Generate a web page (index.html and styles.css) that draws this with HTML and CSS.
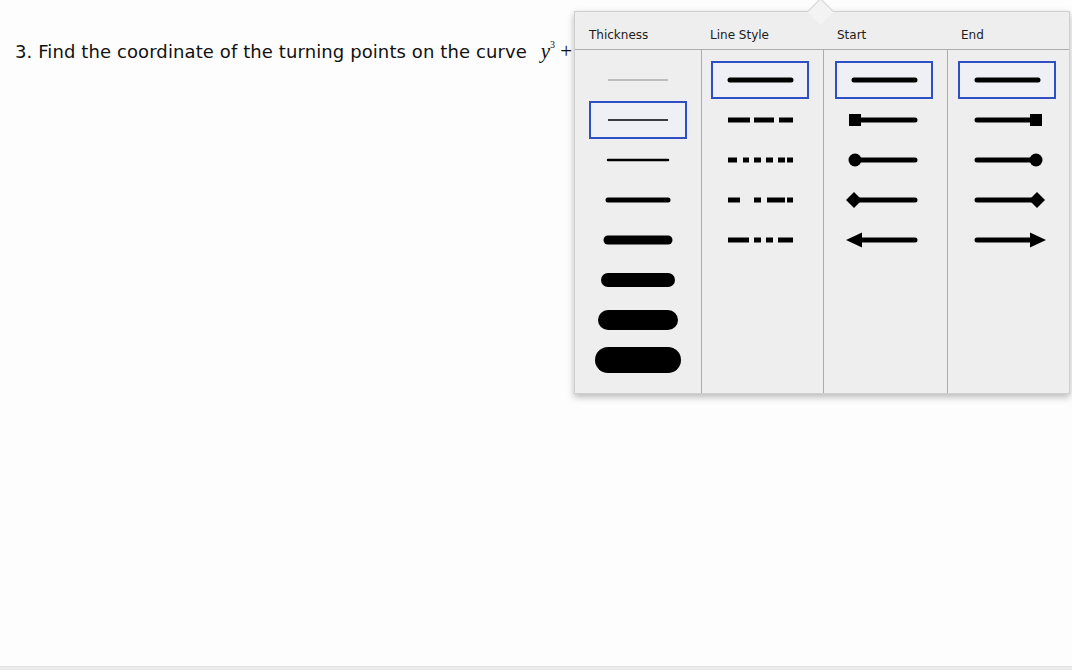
FILE: index.html
```html
<!DOCTYPE html>
<html lang="en">
<head>
    <meta charset="UTF-8">
    <title>Turning points</title>
    <link rel="stylesheet" href="styles.css">
</head>
<body>

<div class="page">
    <p class="question">3. Find the coordinate of the turning points on the curve <span class="math"><i>y</i><sup>3</sup> +</span></p>

    <!-- line format popover -->
    <div class="popover">
        <div class="head">Thickness</div>
        <div class="head head-style">Line Style</div>
        <div class="head">Start</div>
        <div class="head">End</div>

        <div class="col col-thick">
            <div class="opt"><svg viewBox="0 0 98 38"><line x1="19" y1="19" x2="79" y2="19" stroke="#8a8a8a" stroke-width="1"/></svg></div>
            <div class="opt selected"><svg viewBox="0 0 98 38"><line x1="19" y1="19" x2="79" y2="19" stroke="#000" stroke-width="1.3"/></svg></div>
            <div class="opt"><svg viewBox="0 0 98 38"><line x1="19" y1="19" x2="79" y2="19" class="thick" stroke-width="2.5"/></svg></div>
            <div class="opt"><svg viewBox="0 0 98 38"><line x1="19" y1="19" x2="79" y2="19" class="thick" stroke-width="5"/></svg></div>
            <div class="opt"><svg viewBox="0 0 98 38"><line x1="19" y1="19" x2="79" y2="19" class="thick" stroke-width="9"/></svg></div>
            <div class="opt"><svg viewBox="0 0 98 38"><line x1="19" y1="19" x2="79" y2="19" class="thick" stroke-width="14"/></svg></div>
            <div class="opt"><svg viewBox="0 0 98 38"><line x1="19" y1="19" x2="79" y2="19" class="thick" stroke-width="20"/></svg></div>
            <div class="opt"><svg viewBox="0 0 98 38"><line x1="19" y1="19" x2="79" y2="19" class="thick" stroke-width="26"/></svg></div>
        </div>

        <div class="col col-style">
            <div class="opt selected"><svg viewBox="0 0 98 38"><line x1="19" y1="19" x2="80" y2="19" class="thick" stroke-width="5"/></svg></div>
            <div class="opt"><svg viewBox="0 0 98 38"><line x1="17" y1="19" x2="82" y2="19" class="dash" stroke-dasharray="22 4 20 5 14"/></svg></div>
            <div class="opt"><svg viewBox="0 0 98 38"><line x1="17" y1="19" x2="82" y2="19" class="dash" stroke-dasharray="9 6 6 5 7 5 7 5 7 2 6"/></svg></div>
            <div class="opt"><svg viewBox="0 0 98 38"><line x1="17" y1="19" x2="82" y2="19" class="dash" stroke-dasharray="12 14 7 6 18 2 6"/></svg></div>
            <div class="opt"><svg viewBox="0 0 98 38"><line x1="17" y1="19" x2="82" y2="19" class="dash" stroke-dasharray="21 5 7 5 7 5 15"/></svg></div>
        </div>

        <div class="col col-start">
            <div class="opt selected"><svg viewBox="0 0 98 38"><line x1="19" y1="19" x2="80" y2="19" class="thick" stroke-width="5"/></svg></div>
            <div class="opt"><svg viewBox="0 0 98 38"><line x1="22" y1="19" x2="80" y2="19" class="thick" stroke-width="5"/><rect x="14" y="13" width="12" height="12"/></svg></div>
            <div class="opt"><svg viewBox="0 0 98 38"><line x1="22" y1="19" x2="80" y2="19" class="thick" stroke-width="5"/><circle cx="20" cy="19" r="6.5"/></svg></div>
            <div class="opt"><svg viewBox="0 0 98 38"><line x1="22" y1="19" x2="80" y2="19" class="thick" stroke-width="5"/><path d="M11 19 L19 11 L27 19 L19 27 Z"/></svg></div>
            <div class="opt"><svg viewBox="0 0 98 38"><line x1="24" y1="19" x2="80" y2="19" class="thick" stroke-width="5"/><path d="M11 19 L27 11.5 L27 26.5 Z"/></svg></div>
        </div>

        <div class="col col-end">
            <div class="opt selected"><svg viewBox="0 0 98 38"><line x1="19" y1="19" x2="80" y2="19" class="thick" stroke-width="5"/></svg></div>
            <div class="opt"><svg viewBox="0 0 98 38"><line x1="19" y1="19" x2="76" y2="19" class="thick" stroke-width="5"/><rect x="72" y="13" width="12" height="12"/></svg></div>
            <div class="opt"><svg viewBox="0 0 98 38"><line x1="19" y1="19" x2="76" y2="19" class="thick" stroke-width="5"/><circle cx="78" cy="19" r="6.5"/></svg></div>
            <div class="opt"><svg viewBox="0 0 98 38"><line x1="19" y1="19" x2="76" y2="19" class="thick" stroke-width="5"/><path d="M87 19 L79 11 L71 19 L79 27 Z"/></svg></div>
            <div class="opt"><svg viewBox="0 0 98 38"><line x1="19" y1="19" x2="74" y2="19" class="thick" stroke-width="5"/><path d="M88 19 L72 11.5 L72 26.5 Z"/></svg></div>
        </div>
    </div>
</div>

<div class="footer"></div>

</body>
</html>
```

FILE: styles.css
```css
body {
    margin: 0;
    padding: 0;
    background-color: #fdfdfd;
    font-family: "DejaVu Sans", sans-serif;
    min-height: 100vh;
    display: flex;
    flex-direction: column;
}
.page {
    flex: 1;
    position: relative;
    overflow: hidden;
}
.footer {
    height: 3px;
    border-top: 1px solid #e2e2e2;
    background: #ebebeb;
}
.question {
    margin: 0;
    padding: 34px 0 0 15px;
    font-size: 18px;
    line-height: 22px;
    color: #111;
    white-space: nowrap;
    letter-spacing: 0.1px;
}
.math {
    margin-left: 8px;
    font-family: "Liberation Serif", serif;
    font-size: 21px;
    letter-spacing: 0;
}
.math sup {
    font-size: 10px;
    vertical-align: 10px;
}

/* popover with the four option columns */
.popover {
    position: absolute;
    left: 574px;
    top: 11px;
    width: 494px;
    height: 381px;
    background: #eeeeef;
    border: 1px solid #cfcfcf;
    box-shadow: 0 3px 7px rgba(0,0,0,0.28);
    display: grid;
    grid-template-columns: 126px 122px 124px 122px;
    grid-template-rows: 38px 1fr;
}
.popover::before {
    content: "";
    position: absolute;
    left: 236px;
    top: -10px;
    width: 18px;
    height: 18px;
    background: #f3f3f3;
    border-left: 1px solid #d4d4d4;
    border-top: 1px solid #d4d4d4;
    transform: rotate(45deg);
}
.head {
    position: relative;
    font-size: 12px;
    color: #1c1c1c;
    padding: 16px 0 0 14px;
    border-bottom: 1px solid #acacac;
}
.head-style {
    padding-left: 9px;
}
.col {
    display: flex;
    flex-direction: column;
    padding-top: 11px;
    border-left: 1px solid #ababab;
}
.col-thick {
    border-left: none;
    padding-left: 14px;
}
.col-style {
    padding-left: 9px;
}
.col-start {
    padding-left: 11px;
}
.col-end {
    padding-left: 10px;
}
.opt {
    width: 98px;
    height: 38px;
    margin-bottom: 2px;
    box-sizing: border-box;
    border: 2px solid transparent;
}
.opt svg {
    display: block;
    width: 98px;
    height: 38px;
    margin: -2px;
}
.opt.selected {
    border-color: #2f50c4;
    background: #eff0f5;
}
.thick {
    stroke: #000;
    stroke-linecap: round;
}
.dash {
    stroke: #000;
    stroke-width: 5;
}
```
